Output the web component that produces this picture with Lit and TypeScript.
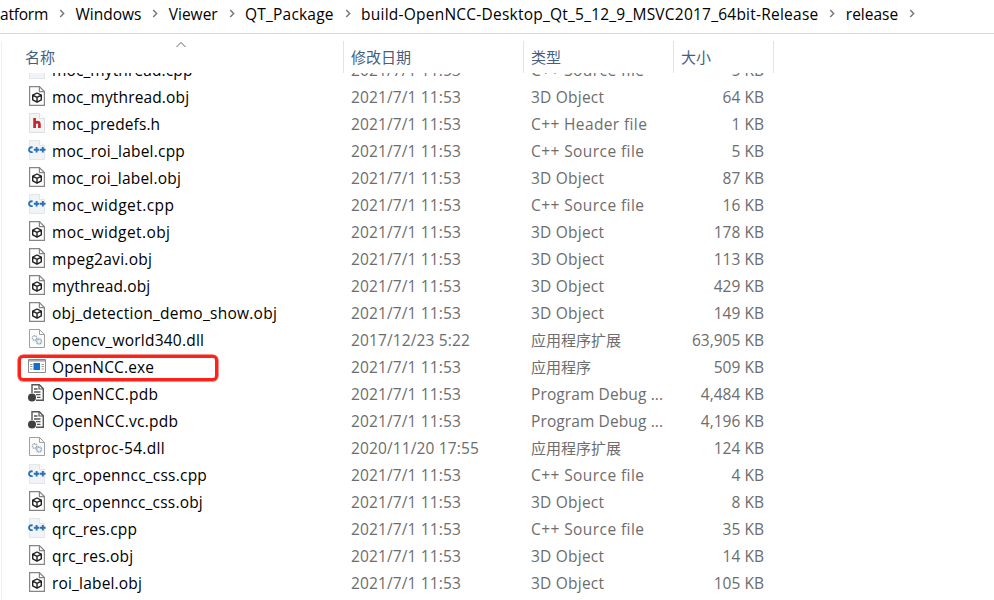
import { LitElement, html, css, svg } from "lit";
import { customElement, property } from "lit/decorators.js";
import { styleMap } from "lit/directives/style-map.js";
import { classMap } from "lit/directives/class-map.js";

type Kind = "obj" | "h" | "cpp" | "dll" | "exe" | "pdb";
interface Entry { name: string; kind: Kind; tracking: number; date: string; size: string; }

const D = "2021/7/1 11:53";
const e = (name: string, kind: Kind, size: string, tracking: number, date = D): Entry => ({ name, kind, size, tracking, date });

const TYPES: Record<Kind, { label: string; tracking: number; cjk?: boolean }> = {
  obj: { label: "3D Object", tracking: 0.22 },
  h: { label: "C++ Header file", tracking: 0.38 },
  cpp: { label: "C++ Source file", tracking: 0.42 },
  dll: { label: "应用程序扩展", tracking: 0, cjk: true },
  exe: { label: "应用程序", tracking: 0, cjk: true },
  pdb: { label: "Program Debug ...", tracking: 0.11 },
};

const FILES: Entry[] = [
  e("moc_mythread.cpp", "cpp", "5 KB", 0.12),
  e("moc_mythread.obj", "obj", "64 KB", 0.14),
  e("moc_predefs.h", "h", "1 KB", 0.11),
  e("moc_roi_label.cpp", "cpp", "5 KB", 0.22),
  e("moc_roi_label.obj", "obj", "87 KB", 0.2),
  e("moc_widget.cpp", "cpp", "16 KB", 0.42),
  e("moc_widget.obj", "obj", "178 KB", 0.4),
  e("mpeg2avi.obj", "obj", "113 KB", 0.28),
  e("mythread.obj", "obj", "429 KB", 0.1),
  e("obj_detection_demo_show.obj", "obj", "149 KB", 0.26),
  e("opencv_world340.dll", "dll", "63,905 KB", 0.22, "2017/12/23 5:22"),
  e("OpenNCC.exe", "exe", "509 KB", 0.15),
  e("OpenNCC.pdb", "pdb", "4,484 KB", 0.26),
  e("OpenNCC.vc.pdb", "pdb", "4,196 KB", 0.26),
  e("postproc-54.dll", "dll", "124 KB", 0.3, "2020/11/20 17:55"),
  e("qrc_openncc_css.cpp", "cpp", "4 KB", 0.22),
  e("qrc_openncc_css.obj", "obj", "8 KB", 0.2),
  e("qrc_res.cpp", "cpp", "35 KB", 0.2),
  e("qrc_res.obj", "obj", "14 KB", 0.18),
  e("roi_label.obj", "obj", "105 KB", 0.18),
];

const PATH: [string, number][] = [
  ["atform", -0.22],
  ["Windows", 0],
  ["Viewer", 0],
  ["QT_Package", 0.2],
  ["build-OpenNCC-Desktop_Qt_5_12_9_MSVC2017_64bit-Release", 0.23],
  ["release", 0],
];

const track = (px: number) => styleMap({ letterSpacing: `${px}px` });

const sheet = (fill: string, stroke: string) => svg`
  <path d="M2.5 .5H12.5L17.5 5.5V19.5H2.5Z" fill=${fill} stroke=${stroke}/>
  <path d="M12.5 .5V5.5H17.5" fill="#fff" stroke=${stroke}/>`;

const ICONS = {
  obj: svg`<path d="M2.6 .6H12.4L17.4 5.6V19.4H2.6Z" fill="#fff" stroke="#858585" stroke-width="1.2"/>
    <path d="M12.4 .6V5.6H17.4" fill="none" stroke="#858585" stroke-width="1.2"/>
    <path d="M10 7L14.3 9.2V13.8L10 16.2L5.7 13.8V9.2ZM5.7 9.2L10 11.4L14.3 9.2M10 11.4V16.2" fill="none" stroke="#222" stroke-width="1.4" stroke-linejoin="round"/>`,
  h: svg`${sheet("#f3f4f6", "#dcdee2")}
    <path d="M7.6 5V15M7.6 11Q8.4 9.2 10.2 9.2Q12.4 9.2 12.4 11.2V15" fill="none" stroke="#c5272d" stroke-width="2.7"/>`,
  cpp: svg`${sheet("#f1f3f6", "#e2e5e9")}
    <path d="M5.6 7.6A2.4 2.4 0 1 0 5.6 11.8M6.8 9.7H12.4M9.6 6.9V12.5M13 9.7H18.6M15.8 6.9V12.5" fill="none" stroke="#2a70b5" stroke-width="1.9"/>`,
  dll: svg`<path d="M2.5 .5H12.5L17.5 5.5V18.5H2.5Z" fill="#fbfbfb" stroke="#a0a0a0"/>
    <path d="M12.5 .5V5.5H17.5" fill="none" stroke="#a0a0a0"/>
    <circle cx="7.6" cy="9" r="2.2" fill="#fff" stroke="#a0a9b0" stroke-width="1.5" stroke-dasharray="1.2 .5"/>
    <circle cx="12" cy="12.4" r="2.5" fill="#e8f2fa" stroke="#8aa6b8" stroke-width="1.5" stroke-dasharray="1.2 .5"/>`,
  exe: svg`<path d="M1.5 3.5H18.5V16.5H1.5Z" fill="#fff" stroke="#8b8b8b"/>
    <path d="M2 4.8H18" stroke="#aaa" stroke-width="1.6"/>
    <path d="M3 8.5H5.5M3 10.5H5.5M3 13H5.5M14.5 8.5H17M14.5 10.5H17M14.5 13H17" stroke="#999"/>
    <path d="M6.5 7H13V14H6.5Z" fill="#0b6fd6"/>`,
  pdb: svg`<path d="M5 10V1.7H12.3L16.3 5.7V17.3H9" fill="#fff" stroke="#555" stroke-width="1.4"/>
    <path d="M12 2V6H16" fill="none" stroke="#555" stroke-width="1.2"/>
    <path d="M7 6H10.5M7 9H13.5M9 11.7H13.5M10 14.4H13.5" stroke="#555" stroke-width="1.3"/>
    <circle cx="5" cy="14.5" r="4" fill="#404040"/>`,
};

@customElement("file-row")
class FileRow extends LitElement {
  @property({ attribute: false }) entry!: Entry;
  static styles = css`
    :host { display: grid; grid-template-columns: 315px 180px 150px 92px; height: 27px; line-height: 27px; padding-left: 25px; color: #6d6d6d; white-space: pre; }
    .name { display: flex; color: #000; position: relative; }
    .icon { width: 20px; height: 20px; margin: 2px 5px 0 0; flex: none; }
    .date { padding-left: 9px; letter-spacing: 0.13px; }
    .type { padding-left: 9px; }
    .cjk { font-size: 15px; }
    .size { text-align: right; letter-spacing: 0.03px; }
    .mark { position: absolute; left: -9px; top: 1px; width: 194px; height: 20px; border: 3px solid #fb2319; border-radius: 5px; box-shadow: 0 0 0 0.5px #fb2319; }
  `;
  render() {
    const f = this.entry;
    const t = TYPES[f.kind];
    return html`
      <div class="name">
        <svg class="icon" viewBox="0 0 20 20">${ICONS[f.kind]}</svg>
        <span style=${track(f.tracking)}>${f.name}</span>
        ${f.kind === "exe" ? html`<div class="mark"></div>` : null}
      </div>
      <div class="date">${f.date}</div>
      <div class=${classMap({ type: true, cjk: !!t.cjk })} style=${track(t.tracking)}>${t.label}</div>
      <div class="size">${f.size}</div>`;
  }
}

@customElement("app-root")
class AppRoot extends LitElement {
  static styles = css`
    :host { display: flex; flex-direction: column; width: 994px; height: 600px; overflow: hidden; background: #fff; font: 15.5px "Open Sans", "Noto Sans CJK SC", sans-serif; color: #000; }
    .path { display: flex; flex: none; height: 33px; line-height: 29px; border-bottom: 1px solid #d9d9d9; white-space: pre; }
    .chev { width: 27.4px; height: 28px; flex: none; }
    .pane { flex: 1; min-height: 0; margin: 7px 0 0 1px; border-left: 1px solid #f0f0f0; display: flex; flex-direction: column; }
    .head { display: grid; grid-template-columns: 342px 180px 150px 100px; height: 32px; flex: none; color: #44607f; font-size: 15px; position: relative; }
    .col { box-sizing: border-box; height: 32px; border-right: 1px solid #e3e3e3; line-height: 33px; padding-left: 7px; }
    .col.first { padding-left: 23px; }
    .sort { position: absolute; left: 172.5px; top: 0; width: 12px; height: 8px; }
    .list { flex: 1; min-height: 0; overflow: hidden; }
    .rows { margin-top: -16px; display: flex; flex-direction: column; }
  `;
  render() {
    return html`
      <nav class="path">${PATH.map(([p, t]) => html`<span style=${track(t)}>${p}</span><svg class="chev" viewBox="0 0 28 28"><path d="M12.5 10L16 13.5L12.5 17" fill="none" stroke="#777" stroke-width="1.5"/></svg>`)}</nav>
      <main class="pane">
        <div class="head">
          <div class="col first">名称</div><div class="col">修改日期</div><div class="col">类型</div><div class="col">大小</div>
          <svg class="sort" viewBox="0 0 12 8"><path d="M1.5 6L6 1.5L10.5 6" fill="none" stroke="#666"/></svg>
        </div>
        <div class="list"><div class="rows">${FILES.map((f) => html`<file-row .entry=${f}></file-row>`)}</div></div>
      </main>`;
  }
}
